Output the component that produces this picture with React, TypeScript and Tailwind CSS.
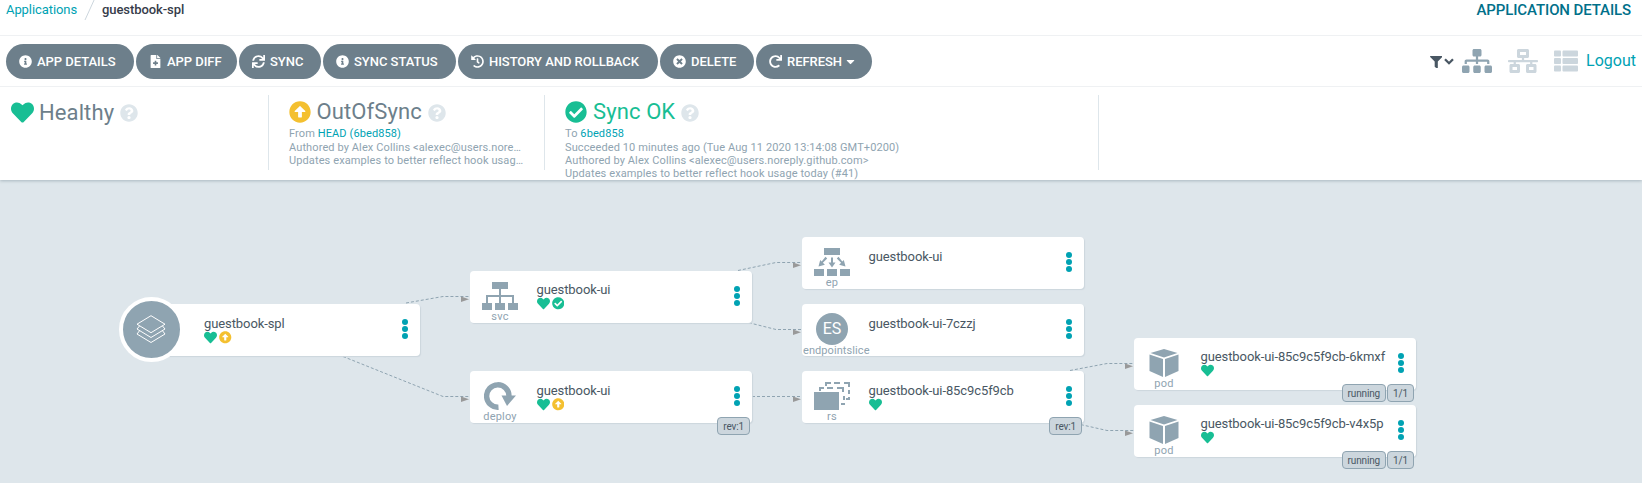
import React from "react";
import {
  FaArrowAltCircleUp,
  FaCaretDown,
  FaCheckCircle,
  FaFileMedical,
  FaFilter,
  FaHeart,
  FaHistory,
  FaInfoCircle,
  FaNetworkWired,
  FaQuestionCircle,
  FaRedo,
  FaSitemap,
  FaSync,
  FaThList,
  FaTimesCircle,
} from "react-icons/fa";

type Health = "healthy" | "synced" | "outofsync";

interface GraphNode {
  id: string;
  name: string;
  place: string;
  kind?: string;
  icon: React.ReactNode;
  status: Health[];
  tags?: string[];
  root?: boolean;
  raised?: boolean;
}

const ServiceIcon = () => (
  <svg width="36" height="28" viewBox="0 0 36 28" fill="#8fa4b1">
    <path d="M10 0h16v7H10zM0 21h10v7H0zM13 21h10v7H13zM26 21h10v7H26z" />
    <path d="M17 7h2v6h13v8h-2v-6H19v6h-2v-6H6v6H4v-8h13z" />
  </svg>
);

const EndpointIcon = () => (
  <svg width="36" height="28" viewBox="0 0 36 28" fill="#8fa4b1">
    <path d="M10 0h16v7H10zM0 21h10v7H0zM13 21h10v7H13zM26 21h10v7H26z" />
    <path d="M17 9.500h2v5h2.500L18 19.500l-3.500-5H17zM11.500 8.800l1.700 1.700-4.300 4.300 2 2-6.400 1.700 1.700-6.400 1.500 1.500zM24.500 8.800l-1.700 1.700 4.300 4.300-2 2 6.400 1.700-1.700-6.400-1.500 1.500z" />
  </svg>
);

const DeployIcon = () => (
  <svg width="32" height="28" viewBox="0 0 32 28">
    <path d="M14.500 25.200A11.200 11.200 0 1 1 25 14" fill="none" stroke="#8fa4b1" strokeWidth="5.400" />
    <path d="M17.500 13.500H32L23 24z" fill="#8fa4b1" />
  </svg>
);

const ReplicaSetIcon = () => (
  <svg width="36" height="28" viewBox="0 0 36 28">
    <path d="M0 10h25v18H0z" fill="#8fa4b1" />
    <path d="M6 9V6h4M13 6h6M23 6h6v4M30 14v4M30 21v1h-3" fill="none" stroke="#8fa4b1" strokeWidth="2" />
    <path d="M12 4V1h5M20 1h6M30 1h5v4M35 8v4M35 15v2h-3" fill="none" stroke="#8fa4b1" strokeWidth="2" />
  </svg>
);

const PodIcon = () => (
  <svg width="30" height="28" viewBox="0 0 30 28" fill="#8fa4b1">
    <path d="M15 0l13.500 4L15 8.500 1.500 4zM.5 5.500L14 10v18L.5 22zM29.500 5.500L16 10v18l13.500-6z" />
  </svg>
);

const StackIcon = () => (
  <svg className="mr-px" width="30" height="29" viewBox="0 0 30 29" fill="none" stroke="#fff" strokeWidth="1">
    <path d="M15 .7l14 8.500-14 8.500L1 9.200z" />
    <path d="M3.500 11L1 14l14 8.500L29 14l-2.500-3" />
    <path d="M3.500 15.800L1 19l14 8.500L29 19l-2.500-3.200" />
  </svg>
);

const EndpointSliceIcon = () => (
  <div className="flex size-8 items-center justify-center rounded-full bg-[#8fa4b1] text-[16px] text-white">ES</div>
);

const nodes: GraphNode[] = [
  { id: "app", name: "guestbook-spl", place: "left-[138px] top-[124px]", icon: <StackIcon />, status: ["healthy", "outofsync"], root: true },
  { id: "svc", name: "guestbook-ui", place: "left-[470px] top-[91px]", kind: "svc", icon: <ServiceIcon />, status: ["healthy", "synced"], raised: true },
  { id: "deploy", name: "guestbook-ui", place: "left-[470px] top-[191px]", kind: "deploy", icon: <DeployIcon />, status: ["healthy", "outofsync"], tags: ["rev:1"] },
  { id: "ep", name: "guestbook-ui", place: "left-[802px] top-[57px]", kind: "ep", icon: <EndpointIcon />, status: [] },
  { id: "es", name: "guestbook-ui-7czzj", place: "left-[802px] top-[124px]", kind: "endpointslice", icon: <EndpointSliceIcon />, status: [] },
  { id: "rs", name: "guestbook-ui-85c9c5f9cb", place: "left-[802px] top-[191px]", kind: "rs", icon: <ReplicaSetIcon />, status: ["healthy"], tags: ["rev:1"] },
  { id: "pod1", name: "guestbook-ui-85c9c5f9cb-6kmxf", place: "left-[1134px] top-[158px]", kind: "pod", icon: <PodIcon />, status: ["healthy"], tags: ["running", "1/1"], raised: true },
  { id: "pod2", name: "guestbook-ui-85c9c5f9cb-v4x5p", place: "left-[1134px] top-[225px]", kind: "pod", icon: <PodIcon />, status: ["healthy"], tags: ["running", "1/1"], raised: true },
];

const edges = [
  "M406 123L443 116.500H470",
  "M343 176.500L443 216.500H470",
  "M738 90.500L776 82.500H802",
  "M744 141.500L776 149.500H802",
  "M752 216.500H802",
  "M1070 190.500L1107 183.500H1134",
  "M1076 243.500L1107 250.500H1134",
];

const arrows: [number, number][] = [
  [461, 116.5],
  [461, 216.5],
  [793, 82.5],
  [793, 149.5],
  [793, 216.5],
  [1125, 183.5],
  [1125, 250.5],
];

function StatusIcon({ status }: { status: Health }) {
  if (status === "healthy") return <FaHeart className="size-[13px] shrink-0 text-[#18be94]" />;
  if (status === "synced") return <FaCheckCircle className="size-[12.500px] shrink-0 text-[#18be94]" />;
  return <FaArrowAltCircleUp className="size-[12.500px] shrink-0 text-[#f4c030]" />;
}

function NodeCard({ node }: { node: GraphNode }) {
  return (
    <div className={`absolute flex h-[52px] w-[282px] rounded-[4px] bg-white shadow-[1px_1px_1px_#ccd6dd] ${node.place}`}>
      {node.root ? (
        <div className="absolute -left-[19px] -top-[7px] flex size-[65px] items-center justify-center rounded-full border-4 border-white bg-[#8fa4b1]">
          {node.icon}
        </div>
      ) : (
        <div className="flex w-[60px] shrink-0 flex-col items-center">
          <div className="mt-[9px] flex h-8 items-center justify-center">{node.icon}</div>
          <span
            className={`text-[11px] leading-[12px] text-[#8fa4b1] ${
              node.kind === "endpointslice" ? "ml-px self-start tracking-[0.080px]" : "tracking-[0.200px]"
            }`}
          >
            {node.kind}
          </span>
        </div>
      )}
      <div className={`flex w-[190px] shrink-0 flex-col ${node.raised ? "pt-[10px]" : "pt-[11px]"} ${node.root ? "ml-[66px]" : "ml-[6.500px]"}`}>
        <span className="whitespace-nowrap text-[13px] leading-[17px] tracking-[-0.090px] text-[#495763]">{node.name}</span>
        <div className="-mt-px flex items-center gap-[2px]">
          {node.status.map((s) => (
            <StatusIcon key={s} status={s} />
          ))}
        </div>
      </div>
      <div className="ml-auto mr-[12px] flex flex-col justify-center gap-[1px] pb-[2px]">
        <i className="size-[6px] rounded-full bg-[#00a2b3]" />
        <i className="size-[6px] rounded-full bg-[#00a2b3]" />
        <i className="size-[6px] rounded-full bg-[#00a2b3]" />
      </div>
      {node.tags && (
        <div className="absolute -bottom-[12px] right-[2px] flex gap-[1px]">
          {node.tags.map((t) => (
            <span key={t} className="flex h-[18px] items-center rounded-[4px] border border-[#8fa4b1] bg-[#ccd6dd] px-[5px] text-[10px] tracking-[-0.150px] text-[#495763]">
              {t}
            </span>
          ))}
        </div>
      )}
    </div>
  );
}

const actions = [
  { label: "APP DETAILS", icon: FaInfoCircle, width: "w-[128px]" },
  { label: "APP DIFF", icon: FaFileMedical, width: "w-[101px]" },
  { label: "SYNC", icon: FaSync, width: "w-[82px]" },
  { label: "SYNC STATUS", icon: FaInfoCircle, width: "w-[133px]" },
  { label: "HISTORY AND ROLLBACK", icon: FaHistory, width: "w-[200px]" },
  { label: "DELETE", icon: FaTimesCircle, width: "w-[94px]" },
  { label: "REFRESH", icon: FaRedo, width: "w-[116px]", caret: true },
];

export default function App() {
  return (
    <div className="flex h-[483px] w-[1642px] flex-col overflow-hidden bg-[#dee6eb] font-['Roboto',sans-serif]">
      <div className="relative z-10 flex h-[180px] shrink-0 flex-col bg-white shadow-[0_1px_3px_#a9b7bf]">
        <header className="flex h-[36px] items-start justify-between border-b border-[#eff1f3] pl-[6px] pr-[11px]">
          <nav className="flex h-[20px] items-center text-[13px] tracking-[-0.080px]">
            <a className="text-[#00a2b3]">Applications</a>
            <svg className="ml-[7px] mr-[6px]" width="12" height="24" viewBox="0 0 12 24">
              <path d="M11 0L1 22" stroke="#ccd6dd" strokeWidth="1" />
            </svg>
            <span className="font-medium text-[#363c4a]">guestbook-spl</span>
          </nav>
          <h1 className="text-[15px] font-medium leading-[20px] tracking-[-0.110px] text-[#00708a]">APPLICATION DETAILS</h1>
        </header>

        <div className="flex h-[51px] items-center border-b border-[#eff1f3] pl-[6px] pr-[6px]">
          <div className="flex gap-[2px]">
            {actions.map(({ label, icon: Icon, width, caret }) => (
              <button key={label} className={`flex h-[35px] items-center rounded-full bg-[#6d7f8b] pl-[13px] text-[13px] font-medium text-white ${width}`}>
                <Icon className="mr-[5px] h-[13px] shrink-0" />
                <span className="whitespace-nowrap pt-px tracking-[-0.040px]">{label}</span>
                {caret && <FaCaretDown className="ml-[2px]" />}
              </button>
            ))}
          </div>
          <div className="ml-auto flex items-center">
            <FaFilter className="mt-[2px] size-[12.500px] text-[#495763]" />
            <svg className="ml-[2px]" width="10" height="7" viewBox="0 0 10 7">
              <path d="M1 1.200l4 4 4-4" fill="none" stroke="#495763" strokeWidth="2.300" />
            </svg>
            <FaSitemap className="ml-[8px] h-[24px] w-[30px] text-[#8fa4b1]" />
            <FaNetworkWired className="ml-[16px] h-[24px] w-[30px] text-[#ccd6dd]" />
            <FaThList className="ml-[16px] size-[24px] text-[#ccd6dd]" />
            <a className="ml-[8px] text-[16px] leading-[20px] text-[#00a2b3]">Logout</a>
          </div>
        </div>

        <div className="flex h-[93px] pt-[8px] text-[11px] leading-[13px] tracking-[0.107px] text-[#8fa4b1]">
          <section className="h-[75px] w-[269px] border-r border-[#dee6eb] pl-[11px]">
            <div className="flex h-[34px] items-center">
              <FaHeart className="size-[23px] text-[#18be94]" />
              <span className="ml-[5px] text-[22px] text-[#6d7f8b]">Healthy</span>
              <FaQuestionCircle className="ml-[6px] mt-[2px] size-[18px] text-[#dee6eb]" />
            </div>
          </section>
          <section className="h-[75px] w-[276px] border-r border-[#dee6eb] pl-[20px]">
            <div className="flex h-[32px] items-center pt-px">
              <FaArrowAltCircleUp className="size-[22px] text-[#f4c030]" />
              <span className="ml-[5.500px] text-[22px] text-[#6d7f8b]">OutOfSync</span>
              <FaQuestionCircle className="ml-[6px] mt-[2px] size-[18px] text-[#dee6eb]" />
            </div>
            <p className="mb-px">From <a className="text-[#00a2b3]">HEAD (6bed858)</a></p>
            <p className="whitespace-nowrap">Authored by Alex Collins &lt;alexec@users.nore…</p>
            <p className="whitespace-nowrap">Updates examples to better reflect hook usag…</p>
          </section>
          <section className="h-[75px] w-[554px] whitespace-nowrap border-r border-[#dee6eb] pl-[20px]">
            <div className="flex h-[32px] items-center pt-px">
              <FaCheckCircle className="size-[22px] text-[#18be94]" />
              <span className="ml-[6px] text-[22px] text-[#18be94]">Sync OK</span>
              <FaQuestionCircle className="ml-[5.500px] mt-[2px] size-[18px] text-[#dee6eb]" />
            </div>
            <p className="mb-px">To <a className="text-[#00a2b3]">6bed858</a></p>
            <p>Succeeded 10 minutes ago (Tue Aug 11 2020 13:14:08 GMT+0200)</p>
            <p>Authored by Alex Collins &lt;alexec@users.noreply.github.com&gt;</p>
            <p>Updates examples to better reflect hook usage today (#41)</p>
          </section>
        </div>
      </div>

      <main className="relative grow">
        <svg className="absolute left-0 top-0" width="1642" height="303">
          {edges.map((d) => (
            <path key={d} d={d} fill="none" stroke="#8fa4b1" strokeWidth="1" strokeDasharray="3 2" />
          ))}
          {arrows.map(([x, y]) => (
            <path key={`${x}-${y}`} d={`M${x} ${y}l8 2.700-8 2.700z`} fill="#999" />
          ))}
        </svg>
        {nodes.map((n) => (
          <NodeCard key={n.id} node={n} />
        ))}
      </main>
    </div>
  );
}
